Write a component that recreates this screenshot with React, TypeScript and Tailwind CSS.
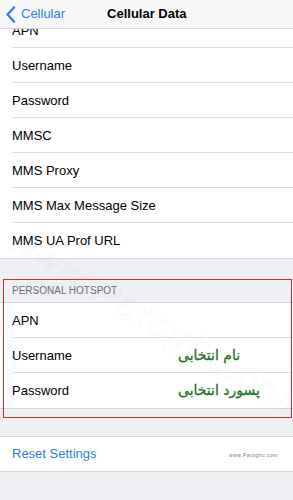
import React from "react";

const topRows = [
  "APN",
  "Username",
  "Password",
  "MMSC",
  "MMS Proxy",
  "MMS Max Message Size",
  "MMS UA Prof URL",
];

const hotspotRows: { label: string; value?: string }[] = [
  { label: "APN" },
  { label: "Username", value: "نام انتخابی" },
  { label: "Password", value: "پسورد انتخابی" },
];

function Row({
  label,
  value,
  last,
}: {
  label: string;
  value?: string;
  last?: boolean;
}) {
  return (
    <div className="relative flex h-[35px] items-center pl-3 bg-white">
      <span className="w-[166px] shrink-0 text-[13px] text-black">{label}</span>
      {value && (
        <span
          dir="rtl"
          className="text-[14px] text-[#267326] [font-family:'DejaVu_Sans',sans-serif] [-webkit-text-stroke:0.3px_#267326]"
        >
          {value}
        </span>
      )}
      {!last && (
        <div className="absolute bottom-0 left-3 right-0 h-px bg-[#dedee2]" />
      )}
    </div>
  );
}

export default function App() {
  return (
    <div className="relative h-[500px] w-[293px] overflow-hidden bg-[#efeff4] [font-family:'Liberation_Sans',Arial,sans-serif]">
      {/* nav bar sits over the scrolled list */}
      <div className="absolute left-0 right-0 top-0 z-10 flex h-[29px] items-center border-b border-[#d6d6da] bg-[#f7f7f7]">
        <svg
          width="11"
          height="17"
          viewBox="0 0 11 17"
          className="ml-[5px]"
          fill="none"
        >
          <path
            d="M9 1.5 L2.5 8.5 L9 15.5"
            stroke="#2f80e0"
            strokeWidth="2.4"
            strokeLinecap="round"
            strokeLinejoin="round"
          />
        </svg>
        <span className="ml-[5px] text-[13px] text-[#2f80e0]">Cellular</span>
        <span className="ml-[42px] text-[13px] font-bold text-black">
          Cellular Data
        </span>
      </div>

      <div className="pt-[13px]">
        <div className="border-b border-[#d6d6da]">
          {topRows.map((r, i) => (
            <Row key={r} label={r} last={i === topRows.length - 1} />
          ))}
        </div>

        <div className="relative">
          <div className="flex h-[43px] items-end pb-[4px] pl-3">
            <span className="text-[10px] uppercase text-[#6d6d72]">
              Personal Hotspot
            </span>
          </div>
          <div className="border-y border-[#d6d6da]">
            {hotspotRows.map((r, i) => (
              <Row
                key={r.label}
                label={r.label}
                value={r.value}
                last={i === hotspotRows.length - 1}
              />
            ))}
          </div>
          <div className="h-[27px]" />
          <div className="pointer-events-none absolute left-[3px] right-px top-[20px] z-20 h-[139px] shadow-[inset_0_0_0_1px_#e3262c]" />
        </div>

        <div className="flex h-[36px] items-center justify-between border-y border-[#d6d6da] bg-white pl-3 pr-[15px]">
          <span className="text-[13px] text-[#2f80e0]">Reset Settings</span>
          <span className="mt-[3px] text-[5px] tracking-[0.5px] text-[#777]">
            www.Patoghu.com
          </span>
        </div>
      </div>

      {/* faint diagonal watermark */}
      <div className="pointer-events-none absolute left-[-10px] top-[292px] w-[320px] rotate-[31deg] text-center text-[36px] italic tracking-[3px] text-transparent [-webkit-text-stroke:1px_rgba(0,0,0,0.05)]">
        www.Patoghu.com
      </div>
    </div>
  );
}
